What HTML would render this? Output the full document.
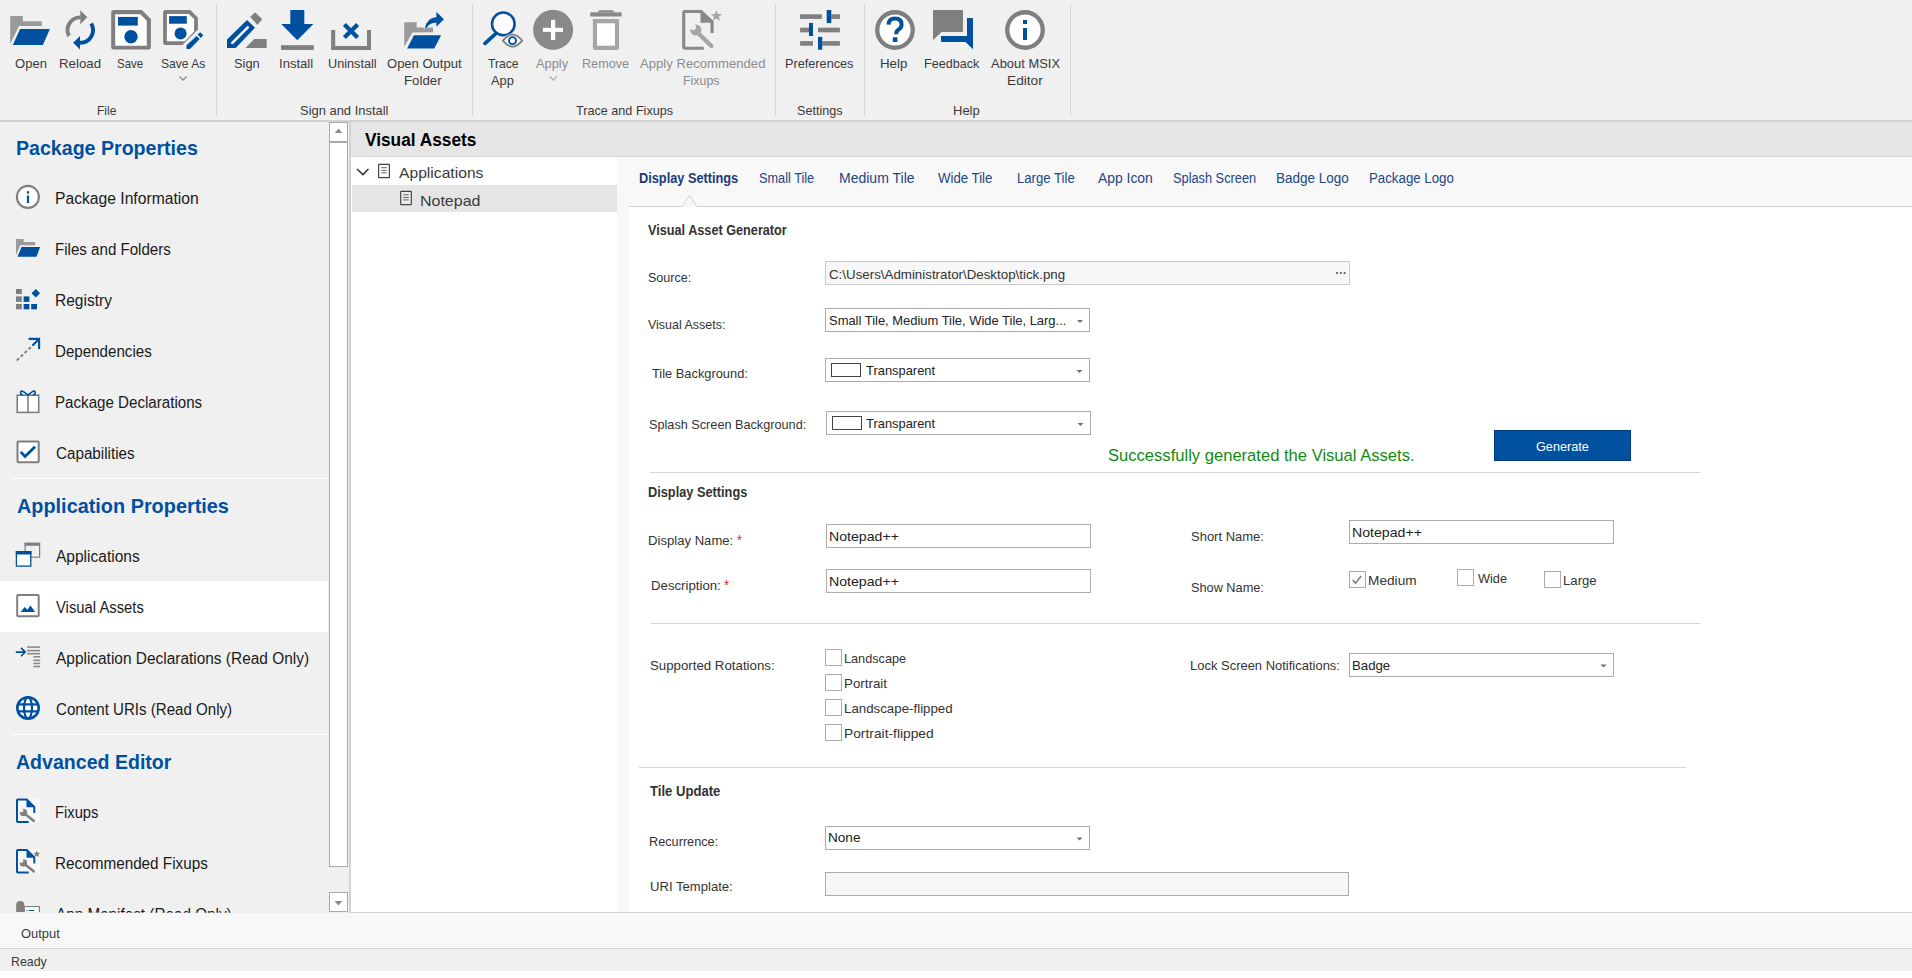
<!DOCTYPE html>
<html><head><meta charset="utf-8"><title>MSIX Packaging Tool - Visual Assets</title>
<style>
html,body{margin:0;padding:0;}
body{width:1912px;height:978px;position:relative;overflow:hidden;background:#fff;font-family:"Liberation Sans", sans-serif;}
.b{position:absolute;box-sizing:border-box;}
.t{position:absolute;white-space:nowrap;transform-origin:0 0;}
svg{position:absolute;left:0;top:0;}
</style></head><body>
<!-- ribbon -->
<div class="b" style="left:0;top:0;width:1912px;height:120px;background:#f0f0f0"></div>
<div class="b" style="left:0;top:119px;width:1912px;height:1px;background:#f3f3f3"></div>
<div class="b" style="left:0;top:120px;width:1912px;height:2px;background:#d1d1d1"></div>
<div class="b" style="left:216px;top:4px;width:1px;height:112px;background:#d6d6d6"></div>
<div class="b" style="left:472px;top:4px;width:1px;height:112px;background:#d6d6d6"></div>
<div class="b" style="left:775px;top:4px;width:1px;height:112px;background:#d6d6d6"></div>
<div class="b" style="left:864px;top:4px;width:1px;height:112px;background:#d6d6d6"></div>
<div class="b" style="left:1070px;top:4px;width:1px;height:112px;background:#d6d6d6"></div>
<!-- nav -->
<div class="b" style="left:0;top:122px;width:349px;height:791px;background:#f0f0f0"></div>
<div class="b" style="left:12px;top:478px;width:316px;height:1px;background:#ffffff"></div>
<div class="b" style="left:12px;top:734px;width:316px;height:1px;background:#ffffff"></div>
<div class="b" style="left:0;top:581px;width:328px;height:51px;background:#ffffff"></div>
<!-- scrollbar -->
<div class="b" style="left:329px;top:122px;width:19px;height:20px;background:#fff;border:1px solid #a9a9a9"></div>
<div class="b" style="left:329px;top:142px;width:19px;height:725px;background:#fff;border:1px solid #a9a9a9"></div>
<div class="b" style="left:329px;top:892px;width:19px;height:20px;background:#fff;border:1px solid #a9a9a9"></div>
<!-- splitter -->
<div class="b" style="left:349px;top:122px;width:2px;height:791px;background:#d3d3d3"></div>
<!-- header -->
<div class="b" style="left:351px;top:122px;width:1561px;height:34px;background:#e6e6e6"></div>
<div class="b" style="left:351px;top:156px;width:1561px;height:1px;background:#d4d4d4"></div>
<!-- tree -->
<div class="b" style="left:351px;top:157px;width:266px;height:755px;background:#fff"></div>
<div class="b" style="left:352px;top:185px;width:265px;height:27px;background:#e5e5e5"></div>
<!-- tabs area -->
<div class="b" style="left:617px;top:157px;width:1295px;height:755px;background:#f8f8f8"></div>
<div class="b" style="left:629px;top:207px;width:1283px;height:705px;background:#fff"></div>
<div class="b" style="left:351px;top:912px;width:1561px;height:1px;background:#d2d2d2"></div>
<!-- output/status -->
<div class="b" style="left:0;top:913px;width:1912px;height:35px;background:#f8f8f8"></div>
<div class="b" style="left:0;top:948px;width:1912px;height:1px;background:#d3d3d3"></div>
<div class="b" style="left:0;top:949px;width:1912px;height:22px;background:#f0f0f0"></div>
<!-- form boxes -->
<div class="b" style="left:825px;top:261px;width:525px;height:24px;background:#f7f7f7;border:1px solid #c9c9c9"></div>
<div class="b" style="left:825px;top:308px;width:265px;height:24px;background:#fff;border:1px solid #acacac"></div>
<div class="b" style="left:825px;top:358px;width:265px;height:24px;background:#fff;border:1px solid #acacac"></div>
<div class="b" style="left:826px;top:411px;width:265px;height:24px;background:#fff;border:1px solid #acacac"></div>
<div class="b" style="left:831px;top:363px;width:30px;height:14px;border:1px solid #444"></div>
<div class="b" style="left:832px;top:416px;width:30px;height:14px;border:1px solid #444"></div>
<div class="b" style="left:1494px;top:430px;width:137px;height:31px;background:#0052a0;border:1px solid #003a7a"></div>
<div class="b" style="left:650px;top:472px;width:1050px;height:1px;background:#d6d6d6"></div>
<div class="b" style="left:826px;top:524px;width:265px;height:24px;background:#fff;border:1px solid #acacac"></div>
<div class="b" style="left:826px;top:569px;width:265px;height:24px;background:#fff;border:1px solid #acacac"></div>
<div class="b" style="left:1349px;top:520px;width:265px;height:24px;background:#fff;border:1px solid #acacac"></div>
<div class="b" style="left:651px;top:623px;width:1049px;height:1px;background:#d6d6d6"></div>
<div class="b" style="left:639px;top:767px;width:1047px;height:1px;background:#d6d6d6"></div>
<div class="b" style="left:1349px;top:653px;width:265px;height:24px;background:#fff;border:1px solid #acacac"></div>
<div class="b" style="left:825px;top:826px;width:265px;height:24px;background:#fff;border:1px solid #acacac"></div>
<div class="b" style="left:825px;top:872px;width:524px;height:24px;background:#f7f7f7;border:1px solid #acacac"></div>
<!-- checkboxes -->
<div class="b" style="left:1349px;top:571px;width:17px;height:17px;background:#fbfbfb;border:1px solid #ababab"></div>
<div class="b" style="left:1457px;top:569px;width:17px;height:17px;background:#fff;border:1px solid #ababab"></div>
<div class="b" style="left:1544px;top:571px;width:17px;height:17px;background:#fff;border:1px solid #ababab"></div>
<div class="b" style="left:825px;top:649px;width:17px;height:17px;background:#fff;border:1px solid #ababab"></div>
<div class="b" style="left:825px;top:674px;width:17px;height:17px;background:#fff;border:1px solid #ababab"></div>
<div class="b" style="left:825px;top:699px;width:17px;height:17px;background:#fff;border:1px solid #ababab"></div>
<div class="b" style="left:825px;top:724px;width:17px;height:17px;background:#fff;border:1px solid #ababab"></div>

<svg width="1912" height="978" viewBox="0 0 1912 978" style="z-index:5">
<defs></defs>
<!-- ===== Ribbon icons ===== -->
<!-- Open -->
<path d="M10.2 16.4 Q10.2 15.9 10.7 15.9 L22.8 15.9 L22.8 21.2 L41.3 21.2 Q41.8 21.2 41.8 21.7 L41.8 25.9 L19.1 25.9 L10.2 43.7 Z" fill="#9a9a9a"/>
<path d="M20.1 29 L49.9 29 L42.9 45 L12.8 45 Z" fill="#0050a0" stroke="#f0f0f0" stroke-width="1.6" stroke-linejoin="miter"/>
<path d="M20.1 29 L49.9 29 L42.9 45 L12.8 45 Z" fill="#0050a0"/>
<!-- Reload -->
<path d="M69.0 36.0 A12.7 12.7 0 0 1 80.6 17.4" fill="none" stroke="#7f7f7f" stroke-width="3.9"/>
<path d="M80.3 10.2 L87.3 17.2 L80.3 24.2 Z" fill="#7f7f7f"/>
<path d="M91.2 23.6 A12.7 12.7 0 0 1 80.0 42.8" fill="none" stroke="#0050a0" stroke-width="3.9"/>
<path d="M80.0 36.1 L73.2 42.7 L80.0 49.4 Z" fill="#0050a0"/>
<!-- Save -->
<path d="M113.7 10.1 L141.9 10.1 L150.9 19.1 L150.9 47 Q150.9 49.5 148.4 49.5 L113.7 49.5 Q111.2 49.5 111.2 47 L111.2 12.6 Q111.2 10.1 113.7 10.1 Z" fill="#7f7f7f"/>
<path d="M115.2 14.2 L140.3 14.2 L146.8 20.7 L146.8 45.7 L115.2 45.7 Z" fill="#fff"/>
<rect x="118" y="16.9" width="19.8" height="8.7" fill="#0050a0"/>
<circle cx="131" cy="36.7" r="6.7" fill="#0050a0"/>
<!-- Save As -->
<path d="M165.6 10.1 L190.3 10.1 L197.9 17.7 L197.9 29.5 L182.5 44.9 L165.6 44.9 Q163.1 44.9 163.1 42.4 L163.1 12.6 Q163.1 10.1 165.6 10.1 Z" fill="#7f7f7f"/>
<path d="M166.9 13.9 L188.9 13.9 L194.1 19.1 L194.1 31.6 L184.9 41.2 L166.9 41.2 Z" fill="#fff"/>
<path d="M184 45 L199 30.5 L203 34.5 L188 49.5 Z" fill="#f0f0f0"/>
<rect x="169.1" y="16.1" width="17.7" height="7.6" fill="#0050a0"/>
<circle cx="180.6" cy="33.5" r="6" fill="#0050a0"/>
<path d="M186.5 45.2 L196.6 35.9 L199.7 39 L190 48.9 L186.5 48.9 Z" fill="#0050a0"/>
<path d="M197.6 34.6 L200.2 32.2 L203.3 35.3 L200.9 37.9 Z" fill="#0050a0"/>
<path d="M179.5 76.5 L183 80 L186.5 76.5" fill="none" stroke="#8a8a8a" stroke-width="1.3"/>
<!-- Sign -->
<path d="M227 39.4 L247 20.1 L255 27.7 L235.7 47.9 L227 47.9 Z" fill="#0050a0"/>
<path d="M232.3 42.8 L247.8 27.3" stroke="#fff" stroke-width="2.6" stroke-linecap="round"/>
<path d="M250.2 16.9 L254.2 13.1 Q255 12.4 255.8 13.1 L261.6 18.6 Q262.3 19.3 261.6 20.1 L257.4 24.9 Z" fill="#7f7f7f"/>
<path d="M245.4 47.9 L254.2 39 L266.7 39 L266.7 47.9 Z" fill="#7f7f7f"/>
<!-- Install -->
<path d="M290.3 10 L304.3 10 L304.3 24.1 L313.4 24.1 L297.3 40.2 L281.2 24.1 L290.3 24.1 Z" fill="#0050a0"/>
<rect x="281" y="45.2" width="32.8" height="4.7" fill="#7f7f7f"/>
<!-- Uninstall -->
<path d="M331.1 30 L335.2 30 L335.2 45.9 L367 45.9 L367 30 L371 30 L371 49.9 L331.1 49.9 Z" fill="#7f7f7f"/>
<path d="M344.4 24.4 L357.6 37.6 M357.6 24.4 L344.4 37.6" stroke="#0050a0" stroke-width="4.2"/>
<!-- Open Output Folder -->
<path d="M404.2 22.8 Q404.2 22.3 404.7 22.3 L416.7 22.3 L416.7 27.4 L423 27.4 A2.6 2.6 0 0 0 427.6 27.4 L432.5 27.4 Q433 27.4 433 27.9 L433 32.2 L412.6 32.6 L404.2 46.8 Z" fill="#9a9a9a"/>
<path d="M413.9 35.2 L441.1 35.2 L434.3 48.5 L407.1 48.5 Z" fill="#0050a0" stroke="#f0f0f0" stroke-width="1.6"/>
<path d="M413.9 35.2 L441.1 35.2 L434.3 48.5 L407.1 48.5 Z" fill="#0050a0"/>
<path d="M424.9 28.4 Q426.6 17.6 437 16.9 L437 22.4 Q429 22.4 426.2 28.4 Z" fill="#0050a0"/>
<path d="M436.4 11.8 L443.9 19.3 L436.4 26.8 Z" fill="#0050a0"/>
<!-- Trace App -->
<circle cx="503.3" cy="23.9" r="11.3" fill="#fff" stroke="#0050a0" stroke-width="2.5"/>
<path d="M485 43.4 L495.3 34.1" stroke="#0050a0" stroke-width="3.7" stroke-linecap="round"/>
<path d="M500.6 40.6 Q512.5 26.2 524.4 40.6 Q512.5 55 500.6 40.6 Z" fill="#f0f0f0"/>
<path d="M502.9 40.6 Q512.5 28.6 522.1 40.6 Q512.5 52.6 502.9 40.6 Z" fill="#fff" stroke="#7f7f7f" stroke-width="1.8"/>
<circle cx="512.5" cy="40.6" r="3.5" fill="#fff" stroke="#0050a0" stroke-width="1.9"/>
<!-- Apply -->
<circle cx="553.1" cy="29.8" r="20" fill="#898989"/>
<rect x="542.9" y="27.8" width="20.1" height="4.1" fill="#fff"/>
<rect x="551" y="19.8" width="4.2" height="20.2" fill="#fff"/>
<path d="M549.8 76.5 L553.3 80 L556.8 76.5" fill="none" stroke="#b0b0b0" stroke-width="1.3"/>
<!-- Remove -->
<path d="M599.1 10.2 L612.7 10.2 L614.8 12.3 L597.6 12.3 Z" fill="#898989"/>
<rect x="590.2" y="12.3" width="31.4" height="4.2" fill="#898989"/>
<path d="M592.9 19.1 L619 19.1 L619 47.4 Q619 49.9 616.5 49.9 L595.4 49.9 Q592.9 49.9 592.9 47.4 Z" fill="#a6a6a6"/>
<rect x="597" y="23.3" width="18" height="22.4" fill="#fff"/>
<!-- Apply Recommended Fixups -->
<path d="M712.05 33 L712.05 22 L701.2 11.55 L685.2 11.55 Q683.7 11.55 683.7 13.05 L683.7 46.75 Q683.7 48.25 685.2 48.25 L703.8 48.25" fill="none" stroke="#898989" stroke-width="3.1"/>
<path d="M700.5 10.7 L701.6 10.7 L713.5 21.5 L713.5 22.8 L700.5 22.8 Z" fill="#898989"/>
<circle cx="695.8" cy="30" r="5.6" fill="#a6a6a6"/>
<circle cx="692.9" cy="27" r="3.1" fill="#f0f0f0"/>
<path d="M698 33 L711.4 46" stroke="#a6a6a6" stroke-width="4.3" stroke-linecap="round"/>
<path d="M716.4 10 L718 13.9 L722 14.1 L718.9 16.7 L719.9 20.7 L716.4 18.5 L712.9 20.7 L713.9 16.7 L710.8 14.1 L714.8 13.9 Z" fill="#a6a6a6"/>
<!-- Preferences -->
<g fill="#7f7f7f">
<rect x="800.1" y="14.3" width="21.8" height="4.6"/><rect x="831.3" y="14.3" width="8.6" height="4.6"/>
<rect x="800.1" y="27.7" width="8.9" height="4.6"/><rect x="818" y="27.7" width="21.9" height="4.6"/>
<rect x="800.1" y="41.1" width="12.9" height="4.6"/><rect x="822.3" y="41.1" width="17.6" height="4.6"/>
</g>
<g fill="#0050a0">
<rect x="826.7" y="10" width="4.6" height="13.1"/>
<rect x="809" y="22.9" width="4" height="13.1"/>
<rect x="818" y="36.9" width="4.3" height="12.8"/>
</g>
<!-- Help -->
<circle cx="895" cy="30" r="17.75" fill="#fff" stroke="#7f7f7f" stroke-width="4.3"/>
<path d="M888.5 24.6 Q888.8 18.6 895 18.6 Q901.6 18.6 901.6 24.4 Q901.6 27.6 898.4 29.6 Q896.2 31 896.2 34.2" fill="none" stroke="#0050a0" stroke-width="4"/>
<rect x="892.8" y="37.3" width="4.6" height="4.7" fill="#0050a0"/>
<!-- Feedback -->
<path d="M934.2 10 L961.8 10 Q963 10 963 11.2 L963 30.8 Q963 32 961.8 32 L941.7 32 L933 40 L933 11.2 Q933 10 934.2 10 Z" fill="#7f7f7f"/>
<path d="M967 18 L972 18 Q973 18 973 19 L973 49.3 L965.5 42 L942.3 42 Q941 42 941 40.7 L941 36 L967 36 Z" fill="#0050a0"/>
<!-- About -->
<circle cx="1025" cy="30" r="17.75" fill="#fff" stroke="#7f7f7f" stroke-width="4.3"/>
<rect x="1023" y="20" width="4" height="4" fill="#0050a0"/>
<rect x="1023" y="28" width="4" height="12" fill="#0050a0"/>

<!-- ===== Nav icons ===== -->
<!-- Package Information -->
<circle cx="27.9" cy="196.9" r="11" fill="#fff" stroke="#7f7f7f" stroke-width="2.1"/>
<rect x="26.9" y="191.2" width="2.2" height="2.4" fill="#0050a0"/>
<rect x="26.9" y="195.5" width="2.2" height="7.5" fill="#0050a0"/>
<!-- Files and Folders -->
<path d="M16 239.1 L23.6 239.1 L23.6 241.9 L35.1 241.9 L35.1 245.3 L20.2 245.3 L16 255.5 Z" fill="#9a9a9a"/>
<path d="M21.5 247 L40.1 247 L36.5 256.7 L17.5 256.7 Z" fill="#0050a0" stroke="#f0f0f0" stroke-width="1.2"/>
<path d="M21.5 247 L40.1 247 L36.5 256.7 L17.5 256.7 Z" fill="#0050a0"/>
<!-- Registry -->
<g fill="#7f7f7f"><rect x="16" y="289" width="5.8" height="5"/><rect x="16" y="296.4" width="5.8" height="5.5"/><rect x="16" y="304" width="5.8" height="5.3"/></g>
<g fill="#0050a0"><rect x="23.6" y="296.4" width="5.8" height="5.5"/><rect x="23.6" y="304" width="5.8" height="5.3"/><rect x="31.2" y="304" width="5.8" height="5.3"/>
<path d="M35.8 289 L40.1 293.3 L35.8 297.6 L31.5 293.3 Z"/></g>
<!-- Dependencies -->
<path d="M16.8 360.5 L33.5 344.5" stroke="#7f7f7f" stroke-width="1.9" stroke-dasharray="3.2 2.2"/>
<path d="M28.6 338.9 L39.1 338.9 L39.1 349 M39.1 338.9 L32.5 345.5" fill="none" stroke="#0050a0" stroke-width="2.1"/>
<!-- Package Declarations -->
<rect x="17.2" y="395.2" width="21.5" height="17.2" fill="#fff" stroke="#7f7f7f" stroke-width="1.6"/>
<path d="M27.95 395.2 L27.95 412.4" stroke="#7f7f7f" stroke-width="1.6"/>
<path d="M27.9 395.2 Q21 388.6 20.6 392.6 Q20.6 395 23 395.2 M27.9 395.2 Q34.8 388.6 35.2 392.6 Q35.2 395 32.8 395.2" fill="none" stroke="#0050a0" stroke-width="1.6"/>
<!-- Capabilities -->
<rect x="17.5" y="441.4" width="21.2" height="20.9" rx="1" fill="#fff" stroke="#7f7f7f" stroke-width="2"/>
<path d="M20.8 451.9 L25 456.6 L35.1 446.8" fill="none" stroke="#0050a0" stroke-width="2.8"/>
<!-- Applications -->
<rect x="25.1" y="543.3" width="14.5" height="13.9" fill="none" stroke="#7f7f7f" stroke-width="1.2"/>
<rect x="24.6" y="542.8" width="15.5" height="3" fill="#7f7f7f"/>
<rect x="16.4" y="551.7" width="14.4" height="14.4" fill="#fff" stroke="#0050a0" stroke-width="1.3"/>
<rect x="15.8" y="551.1" width="15.6" height="3.4" fill="#0050a0"/>
<!-- Visual Assets -->
<rect x="17.2" y="594.9" width="21.5" height="21.3" rx="1" fill="#fff" stroke="#7f7f7f" stroke-width="2"/>
<path d="M20.7 611.9 L24.6 606.9 L27.5 609.8 L30.4 605.5 L35.2 611.9 Z" fill="#0050a0"/>
<!-- App Declarations -->
<path d="M15.8 652.1 L25 652.1 M21 647.9 L25.2 652.1 L21 656.3" fill="none" stroke="#0050a0" stroke-width="1.6"/>
<g fill="#8a8a8a">
<rect x="27.1" y="646.3" width="13" height="1.6"/><rect x="27.1" y="649.8" width="13" height="1.6"/><rect x="27.1" y="652.9" width="13" height="1.6"/>
<rect x="33.3" y="656" width="6.8" height="1.6"/><rect x="33.3" y="659.5" width="6.8" height="1.6"/><rect x="33.3" y="662.6" width="6.8" height="1.6"/><rect x="33.3" y="665.7" width="6.8" height="1.6"/>
</g>
<!-- Content URIs globe -->
<circle cx="28" cy="707.9" r="10.7" fill="#fff" stroke="#0050a0" stroke-width="2.6"/>
<g fill="none" stroke="#0050a0" stroke-width="2.2">
<ellipse cx="28" cy="707.9" rx="4" ry="10.6"/>
<path d="M17 704.3 L39 704.3 M17 711.4 L39 711.4"/>
</g>
<!-- Fixups -->
<rect x="16" y="798.7" width="23.9" height="24.3" fill="#f8f8f8"/>
<path d="M34.3 813 L34.3 806.8 L26.8 799.5 L17.8 799.5 Q17 799.5 17 800.3 L17 821.3 Q17 822.1 17.8 822.1 L28.7 822.1" fill="none" stroke="#0050a0" stroke-width="2"/>
<path d="M26.5 799.5 L34.6 807.2 L26.5 807.2 Z" fill="#0050a0"/>
<circle cx="23.4" cy="812.4" r="3.7" fill="#7f7f7f"/>
<circle cx="21.3" cy="810.3" r="2.1" fill="#f8f8f8"/>
<path d="M24.8 813.8 L33.6 820.8" stroke="#7f7f7f" stroke-width="2.7" stroke-linecap="round"/>
<!-- Recommended Fixups -->
<rect x="16" y="849.2" width="23.9" height="24.3" fill="#f8f8f8"/>
<path d="M34.3 863.5 L34.3 857.3 L26.8 850.0 L17.8 850.0 Q17 850.0 17 850.8 L17 871.8 Q17 872.6 17.8 872.6 L28.7 872.6" fill="none" stroke="#0050a0" stroke-width="2"/>
<path d="M26.5 850.0 L34.6 857.7 L26.5 857.7 Z" fill="#0050a0"/>
<circle cx="23.4" cy="862.9" r="3.7" fill="#7f7f7f"/>
<circle cx="21.3" cy="860.8" r="2.1" fill="#f8f8f8"/>
<path d="M24.8 864.3 L33.6 871.3" stroke="#7f7f7f" stroke-width="2.7" stroke-linecap="round"/>
<path d="M36.8 850.5 L37.8 852.8 L40.2 853 L38.4 854.6 L39 857 L36.8 855.7 L34.6 857 L35.2 854.6 L33.4 853 L35.8 852.8 Z" fill="#7f7f7f"/>
<!-- App Manifest (clipped) -->
<path d="M16.2 912 L16.2 904.5 Q16.2 901 20.2 901 Q24.3 901 24.3 904.5 L24.3 912 Z" fill="#7f7f7f"/>
<path d="M24.3 912 L24.3 906.5 L39.4 906.5 L39.4 912" fill="#fff" stroke="#7f7f7f" stroke-width="1.2"/>
<path d="M26.5 910.5 L27.5 910.5 M29 910.5 L34 910.5" stroke="#0050a0" stroke-width="1.2"/>

<!-- ===== scrollbar arrows ===== -->
<path d="M334.7 133.1 L338.5 128.5 L342.3 133.1 Z" fill="#8a8a8a"/>
<path d="M334.5 900.9 L342.3 900.9 L338.5 905.4 Z" fill="#8a8a8a"/>

<!-- ===== tree ===== -->
<path d="M357.1 169 L362.9 174.6 L368.5 169" fill="none" stroke="#333" stroke-width="1.5"/>
<rect x="378.6" y="164.3" width="10.8" height="13.3" rx="0.6" fill="#fff" stroke="#444" stroke-width="1.2"/>
<path d="M381.2 167.7 L386.8 167.7 M381.2 170.4 L386.8 170.4 M381.2 172.8 L386.8 172.8" stroke="#555" stroke-width="0.9"/>
<rect x="400.7" y="191.4" width="10.6" height="13.3" rx="0.6" fill="#eeeeee" stroke="#444" stroke-width="1.2"/>
<path d="M403.2 194.8 L408.8 194.8 M403.2 197.5 L408.8 197.5 M403.2 199.9 L408.8 199.9" stroke="#555" stroke-width="0.9"/>

<!-- ===== tab notch ===== -->
<path d="M629 206.5 L682.1 206.5 L689.5 195.6 L696.9 206.5 L1912 206.5" fill="none" stroke="#d0d0d0" stroke-width="1"/>

<!-- ===== form glyphs ===== -->
<g fill="#555"><circle cx="1337" cy="273" r="1.1"/><circle cx="1340.8" cy="273" r="1.1"/><circle cx="1344.6" cy="273" r="1.1"/></g>
<g fill="#707070">
<path d="M1077 320 L1083 320 L1080 323 Z"/>
<path d="M1076.5 370 L1082.5 370 L1079.5 373 Z"/>
<path d="M1077.5 423 L1083.5 423 L1080.5 426 Z"/>
<path d="M1600.5 664.5 L1606.5 664.5 L1603.5 667.5 Z"/>
<path d="M1076.5 837.5 L1082.5 837.5 L1079.5 840.5 Z"/>
</g>
<path d="M1352.7 580 L1355.5 583.1 L1361.2 576" fill="none" stroke="#7a7a7a" stroke-width="1.5"/>
</svg>

<div class="t" style="left:14.50px;top:57.87px;font-size:12.20px;line-height:12.20px;color:#3a3a3a;transform:scaleX(1.0711)">Open</div>
<div class="t" style="left:59.31px;top:57.87px;font-size:12.20px;line-height:12.20px;color:#3a3a3a;transform:scaleX(1.0911)">Reload</div>
<div class="t" style="left:117.00px;top:57.87px;font-size:12.20px;line-height:12.20px;color:#3a3a3a;transform:scaleX(0.9393)">Save</div>
<div class="t" style="left:161.00px;top:57.87px;font-size:12.20px;line-height:12.20px;color:#3a3a3a;transform:scaleX(0.9935)">Save As</div>
<div class="t" style="left:97.01px;top:104.77px;font-size:12.20px;line-height:12.20px;color:#3a3a3a;transform:scaleX(0.9862)">File</div>
<div class="t" style="left:234.00px;top:57.87px;font-size:12.20px;line-height:12.20px;color:#3a3a3a;transform:scaleX(1.0502)">Sign</div>
<div class="t" style="left:279.23px;top:57.87px;font-size:12.20px;line-height:12.20px;color:#3a3a3a;transform:scaleX(1.0720)">Install</div>
<div class="t" style="left:327.60px;top:57.87px;font-size:12.20px;line-height:12.20px;color:#3a3a3a;transform:scaleX(1.0406)">Uninstall</div>
<div class="t" style="left:386.60px;top:57.87px;font-size:12.20px;line-height:12.20px;color:#3a3a3a;transform:scaleX(1.0682)">Open Output</div>
<div class="t" style="left:404.31px;top:74.57px;font-size:12.20px;line-height:12.20px;color:#3a3a3a;transform:scaleX(1.0870)">Folder</div>
<div class="t" style="left:300.00px;top:104.77px;font-size:12.20px;line-height:12.20px;color:#3a3a3a;transform:scaleX(1.0614)">Sign and Install</div>
<div class="t" style="left:487.50px;top:57.87px;font-size:12.20px;line-height:12.20px;color:#3a3a3a;transform:scaleX(0.9960)">Trace</div>
<div class="t" style="left:491.00px;top:74.57px;font-size:12.20px;line-height:12.20px;color:#3a3a3a;transform:scaleX(1.0499)">App</div>
<div class="t" style="left:536.00px;top:57.87px;font-size:12.20px;line-height:12.20px;color:#8c8c8c;transform:scaleX(1.0512)">Apply</div>
<div class="t" style="left:582.46px;top:57.87px;font-size:12.20px;line-height:12.20px;color:#8c8c8c;transform:scaleX(1.0358)">Remove</div>
<div class="t" style="left:640.20px;top:57.87px;font-size:12.20px;line-height:12.20px;color:#8c8c8c;transform:scaleX(1.0765)">Apply Recommended</div>
<div class="t" style="left:683.28px;top:74.57px;font-size:12.20px;line-height:12.20px;color:#8c8c8c;transform:scaleX(1.0172)">Fixups</div>
<div class="t" style="left:575.70px;top:104.77px;font-size:12.20px;line-height:12.20px;color:#3a3a3a;transform:scaleX(1.0362)">Trace and Fixups</div>
<div class="t" style="left:785.16px;top:57.87px;font-size:12.20px;line-height:12.20px;color:#3a3a3a;transform:scaleX(1.0415)">Preferences</div>
<div class="t" style="left:797.20px;top:104.77px;font-size:12.20px;line-height:12.20px;color:#3a3a3a;transform:scaleX(1.0332)">Settings</div>
<div class="t" style="left:879.91px;top:57.87px;font-size:12.20px;line-height:12.20px;color:#3a3a3a;transform:scaleX(1.0911)">Help</div>
<div class="t" style="left:924.27px;top:57.87px;font-size:12.20px;line-height:12.20px;color:#3a3a3a;transform:scaleX(1.0313)">Feedback</div>
<div class="t" style="left:991.30px;top:57.87px;font-size:12.20px;line-height:12.20px;color:#3a3a3a;transform:scaleX(1.0616)">About MSIX</div>
<div class="t" style="left:1007.18px;top:74.57px;font-size:12.20px;line-height:12.20px;color:#3a3a3a;transform:scaleX(1.1241)">Editor</div>
<div class="t" style="left:953.43px;top:104.77px;font-size:12.20px;line-height:12.20px;color:#3a3a3a;transform:scaleX(1.0664)">Help</div>
<div class="t" style="left:15.74px;top:138.35px;font-size:20.50px;line-height:20.50px;font-weight:bold;color:#0050a0;transform:scaleX(0.9556)">Package Properties</div>
<div class="t" style="left:54.51px;top:191.23px;font-size:15.80px;line-height:15.80px;color:#1a1a1a;transform:scaleX(0.9916)">Package Information</div>
<div class="t" style="left:54.54px;top:241.83px;font-size:15.80px;line-height:15.80px;color:#1a1a1a;transform:scaleX(0.9562)">Files and Folders</div>
<div class="t" style="left:54.52px;top:293.33px;font-size:15.80px;line-height:15.80px;color:#1a1a1a;transform:scaleX(0.9836)">Registry</div>
<div class="t" style="left:54.54px;top:344.13px;font-size:15.80px;line-height:15.80px;color:#1a1a1a;transform:scaleX(0.9580)">Dependencies</div>
<div class="t" style="left:54.54px;top:394.93px;font-size:15.80px;line-height:15.80px;color:#1a1a1a;transform:scaleX(0.9577)">Package Declarations</div>
<div class="t" style="left:55.50px;top:446.03px;font-size:15.80px;line-height:15.80px;color:#1a1a1a;transform:scaleX(0.9625)">Capabilities</div>
<div class="t" style="left:16.50px;top:496.15px;font-size:20.50px;line-height:20.50px;font-weight:bold;color:#0050a0;transform:scaleX(0.9688)">Application Properties</div>
<div class="t" style="left:55.50px;top:549.33px;font-size:15.80px;line-height:15.80px;color:#1a1a1a;transform:scaleX(0.9826)">Applications</div>
<div class="t" style="left:55.50px;top:600.13px;font-size:15.80px;line-height:15.80px;color:#1a1a1a;transform:scaleX(0.9383)">Visual Assets</div>
<div class="t" style="left:55.50px;top:651.13px;font-size:15.80px;line-height:15.80px;color:#1a1a1a;transform:scaleX(0.9770)">Application Declarations (Read Only)</div>
<div class="t" style="left:55.50px;top:701.63px;font-size:15.80px;line-height:15.80px;color:#1a1a1a;transform:scaleX(0.9549)">Content URIs (Read Only)</div>
<div class="t" style="left:16.40px;top:752.15px;font-size:20.50px;line-height:20.50px;font-weight:bold;color:#0050a0;transform:scaleX(0.9539)">Advanced Editor</div>
<div class="t" style="left:54.67px;top:805.33px;font-size:15.80px;line-height:15.80px;color:#1a1a1a;transform:scaleX(0.9336)">Fixups</div>
<div class="t" style="left:54.63px;top:856.13px;font-size:15.80px;line-height:15.80px;color:#1a1a1a;transform:scaleX(0.9673)">Recommended Fixups</div>
<div class="t" style="left:55.60px;top:906.63px;font-size:15.80px;line-height:15.80px;clip-path:inset(0 0 9.63px 0);color:#1a1a1a;transform:scaleX(0.9665)">App Manifest (Read Only)</div>
<div class="t" style="left:365.10px;top:130.61px;font-size:18.30px;line-height:18.30px;font-weight:bold;color:#000;transform:scaleX(0.9452)">Visual Assets</div>
<div class="t" style="left:399.30px;top:166.47px;font-size:14.80px;line-height:14.80px;color:#3a3a3a;transform:scaleX(1.0581)">Applications</div>
<div class="t" style="left:420.22px;top:193.67px;font-size:14.80px;line-height:14.80px;color:#3a3a3a;transform:scaleX(1.0802)">Notepad</div>
<div class="t" style="left:639.30px;top:171.05px;font-size:14.00px;line-height:14.00px;font-weight:bold;color:#1b3a78;transform:scaleX(0.9108)">Display Settings</div>
<div class="t" style="left:759.00px;top:171.05px;font-size:14.00px;line-height:14.00px;color:#234585;transform:scaleX(0.9092)">Small Tile</div>
<div class="t" style="left:839.00px;top:171.05px;font-size:14.00px;line-height:14.00px;color:#234585;transform:scaleX(1.0009)">Medium Tile</div>
<div class="t" style="left:938.00px;top:171.05px;font-size:14.00px;line-height:14.00px;color:#234585;transform:scaleX(0.9442)">Wide Tile</div>
<div class="t" style="left:1016.66px;top:171.05px;font-size:14.00px;line-height:14.00px;color:#234585;transform:scaleX(0.9385)">Large Tile</div>
<div class="t" style="left:1098.40px;top:171.05px;font-size:14.00px;line-height:14.00px;color:#234585;transform:scaleX(0.9913)">App Icon</div>
<div class="t" style="left:1173.20px;top:171.05px;font-size:14.00px;line-height:14.00px;color:#234585;transform:scaleX(0.9128)">Splash Screen</div>
<div class="t" style="left:1276.44px;top:171.05px;font-size:14.00px;line-height:14.00px;color:#234585;transform:scaleX(0.9648)">Badge Logo</div>
<div class="t" style="left:1369.35px;top:171.05px;font-size:14.00px;line-height:14.00px;color:#234585;transform:scaleX(0.9478)">Package Logo</div>
<div class="t" style="left:648.00px;top:223.52px;font-size:13.80px;line-height:13.80px;font-weight:bold;color:#333;transform:scaleX(0.9185)">Visual Asset Generator</div>
<div class="t" style="left:648.40px;top:271.33px;font-size:13.20px;line-height:13.20px;color:#333;transform:scaleX(0.9512)">Source:</div>
<div class="t" style="left:829.00px;top:267.79px;font-size:13.60px;line-height:13.60px;color:#333;transform:scaleX(0.9799)">C:\Users\Administrator\Desktop\tick.png</div>
<div class="t" style="left:648.40px;top:317.53px;font-size:13.20px;line-height:13.20px;color:#333;transform:scaleX(0.9461)">Visual Assets:</div>
<div class="t" style="left:829.00px;top:313.99px;font-size:13.60px;line-height:13.60px;color:#222;transform:scaleX(0.9520)">Small Tile, Medium Tile, Wide Tile, Larg...</div>
<div class="t" style="left:651.60px;top:367.13px;font-size:13.20px;line-height:13.20px;color:#333;transform:scaleX(0.9734)">Tile Background:</div>
<div class="t" style="left:865.50px;top:364.39px;font-size:13.60px;line-height:13.60px;color:#222;transform:scaleX(0.9492)">Transparent</div>
<div class="t" style="left:649.20px;top:417.53px;font-size:13.20px;line-height:13.20px;color:#333;transform:scaleX(0.9618)">Splash Screen Background:</div>
<div class="t" style="left:866.30px;top:417.19px;font-size:13.60px;line-height:13.60px;color:#222;transform:scaleX(0.9492)">Transparent</div>
<div class="t" style="left:1108.30px;top:447.40px;font-size:16.30px;line-height:16.30px;color:#118a11;transform:scaleX(1.0181)">Successfully generated the Visual Assets.</div>
<div class="t" style="left:1536.00px;top:440.30px;font-size:13.00px;line-height:13.00px;color:#ffffff;transform:scaleX(0.9746)">Generate</div>
<div class="t" style="left:648.40px;top:486.42px;font-size:13.80px;line-height:13.80px;font-weight:bold;color:#333;transform:scaleX(0.9251)">Display Settings</div>
<div class="t" style="left:648.21px;top:533.63px;font-size:13.20px;line-height:13.20px;color:#333;transform:scaleX(0.9943)">Display Name:</div>
<div class="t" style="left:737.00px;top:531.80px;font-size:15.00px;line-height:15.00px;color:#e82030;transform:scaleX(0.8333)">*</div>
<div class="t" style="left:829.26px;top:530.39px;font-size:13.60px;line-height:13.60px;color:#222;transform:scaleX(1.0387)">Notepad++</div>
<div class="t" style="left:650.60px;top:578.63px;font-size:13.20px;line-height:13.20px;color:#333;transform:scaleX(1.0020)">Description:</div>
<div class="t" style="left:724.00px;top:577.40px;font-size:15.00px;line-height:15.00px;color:#e82030;transform:scaleX(0.8667)">*</div>
<div class="t" style="left:829.26px;top:574.59px;font-size:13.60px;line-height:13.60px;color:#222;transform:scaleX(1.0387)">Notepad++</div>
<div class="t" style="left:1191.30px;top:529.93px;font-size:13.20px;line-height:13.20px;color:#333;transform:scaleX(0.9842)">Short Name:</div>
<div class="t" style="left:1351.96px;top:525.99px;font-size:13.60px;line-height:13.60px;color:#222;transform:scaleX(1.0402)">Notepad++</div>
<div class="t" style="left:1191.30px;top:581.23px;font-size:13.20px;line-height:13.20px;color:#333;transform:scaleX(0.9649)">Show Name:</div>
<div class="t" style="left:1368.41px;top:574.53px;font-size:12.60px;line-height:12.60px;color:#333;transform:scaleX(1.0854)">Medium</div>
<div class="t" style="left:1477.70px;top:572.83px;font-size:12.60px;line-height:12.60px;color:#333;transform:scaleX(1.0109)">Wide</div>
<div class="t" style="left:1562.96px;top:574.63px;font-size:12.60px;line-height:12.60px;color:#333;transform:scaleX(1.0447)">Large</div>
<div class="t" style="left:650.30px;top:659.43px;font-size:13.20px;line-height:13.20px;color:#333;transform:scaleX(1.0054)">Supported Rotations:</div>
<div class="t" style="left:844.19px;top:652.83px;font-size:12.60px;line-height:12.60px;color:#333;transform:scaleX(1.0080)">Landscape</div>
<div class="t" style="left:844.14px;top:677.93px;font-size:12.60px;line-height:12.60px;color:#333;transform:scaleX(1.0600)">Portrait</div>
<div class="t" style="left:844.14px;top:703.13px;font-size:12.60px;line-height:12.60px;color:#333;transform:scaleX(1.0557)">Landscape-flipped</div>
<div class="t" style="left:844.10px;top:727.83px;font-size:12.60px;line-height:12.60px;color:#333;transform:scaleX(1.0953)">Portrait-flipped</div>
<div class="t" style="left:1190.32px;top:659.03px;font-size:13.20px;line-height:13.20px;color:#333;transform:scaleX(0.9834)">Lock Screen Notifications:</div>
<div class="t" style="left:1351.83px;top:658.69px;font-size:13.60px;line-height:13.60px;color:#222;transform:scaleX(0.9722)">Badge</div>
<div class="t" style="left:650.20px;top:784.82px;font-size:13.80px;line-height:13.80px;font-weight:bold;color:#333;transform:scaleX(0.9498)">Tile Update</div>
<div class="t" style="left:649.24px;top:834.93px;font-size:13.20px;line-height:13.20px;color:#333;transform:scaleX(0.9634)">Recurrence:</div>
<div class="t" style="left:828.30px;top:831.49px;font-size:13.60px;line-height:13.60px;color:#222;transform:scaleX(0.9988)">None</div>
<div class="t" style="left:650.01px;top:879.63px;font-size:13.20px;line-height:13.20px;color:#333;transform:scaleX(0.9929)">URI Template:</div>
<div class="t" style="left:20.60px;top:927.56px;font-size:12.80px;line-height:12.80px;color:#3a3a3a;transform:scaleX(1.0087)">Output</div>
<div class="t" style="left:10.63px;top:956.26px;font-size:12.80px;line-height:12.80px;color:#3a3a3a;transform:scaleX(0.9674)">Ready</div>
</body></html>
